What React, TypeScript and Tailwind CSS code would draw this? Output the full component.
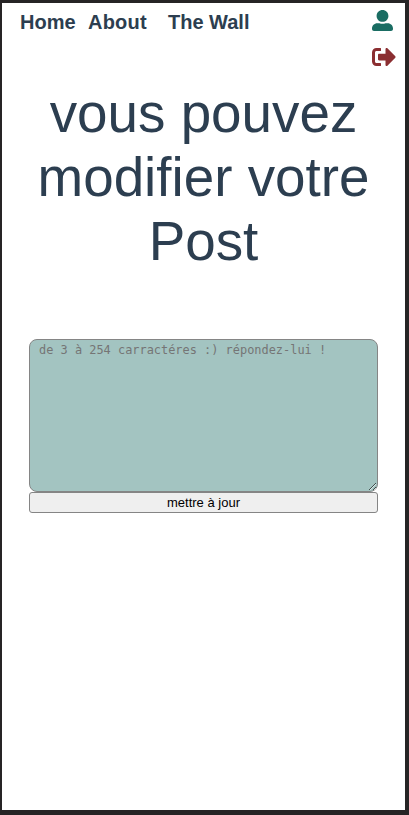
import React from "react";
import { FaUserAlt, FaSignOutAlt } from "react-icons/fa";

export default function App() {
  return (
    <div className="h-[815px] w-[409px] bg-[#262425] pt-[3px] pr-1 pb-[5px] pl-0.5 font-['Liberation_Sans',Arial,sans-serif] text-[#2c3e50]">
      <div className="h-full bg-white">
        <header className="flex h-[78px] justify-between">
          <nav className="flex pt-[7px] pl-[18px] text-[20px] leading-6 font-bold whitespace-nowrap">
            <a className="w-[68px]">Home</a>
            <a className="w-[80px] tracking-[0.2px]">About</a>
            <a>The Wall</a>
          </nav>
          <div className="flex w-[36px] flex-col items-start pt-[7px]">
            <FaUserAlt className="ml-[3px] size-[21px] text-[#1a6d63]" />
            <FaSignOutAlt className="mt-[14px] ml-[3px] size-[24px] text-[#8b2e31]" />
          </div>
        </header>
        <h1 className="text-center text-[54.8px] leading-[64px] font-normal">
          vous pouvez
          <br />
          modifier votre
          <br />
          Post
        </h1>
        <form className="mt-[66px] mr-[27px] ml-[27px] flex flex-col">
          <textarea
            placeholder="de 3 à 254 carractéres :) répondez-lui !"
            className="block h-[153px] w-full rounded-lg border border-[#858585] bg-[#a3c4c1] px-[9px] pt-[3px] font-['DejaVu_Sans_Mono',monospace] text-[11.93px] leading-[15px] placeholder:text-[#757575]"
          />
          <button
            type="button"
            className="h-[21px] w-full rounded-[3px] border border-[#858585] bg-[#efefef] text-[13px] leading-[15px] text-black"
          >
            mettre à jour
          </button>
        </form>
      </div>
    </div>
  );
}
